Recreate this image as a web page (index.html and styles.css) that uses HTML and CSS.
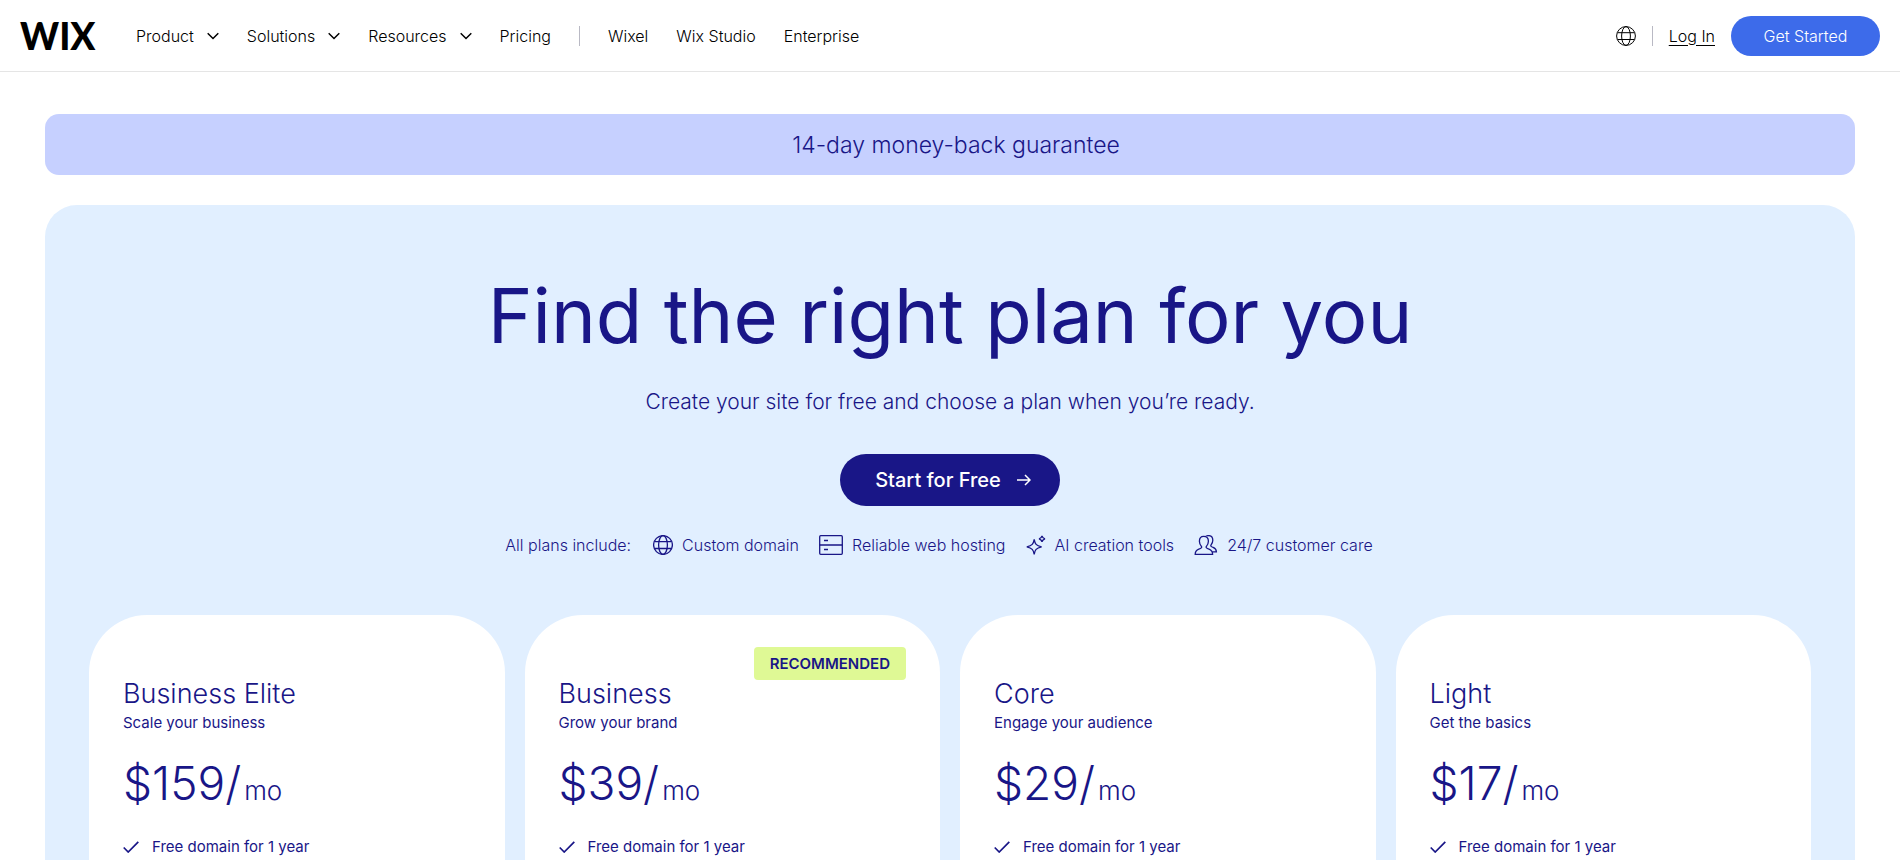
FILE: index.html
```html
<!DOCTYPE html>
<html lang="en">
<head>
<meta charset="utf-8">
<meta name="viewport" content="width=device-width, initial-scale=1">
<title>Wix Pricing</title>
<link rel="stylesheet" href="styles.css">
</head>
<body>
<svg class="sprite" aria-hidden="true">
  <symbol id="chevron" viewBox="0 0 12 8"><path d="M.7 1.2 6 6.5l5.300-5.300"/></symbol>
  <symbol id="globe" viewBox="0 0 20 20"><circle cx="10" cy="10" r="9.400"/><ellipse cx="10" cy="10" rx="4.400" ry="9.400"/><path d="M1.500 6.700h17M1.500 13.500h17"/></symbol>
  <symbol id="check" viewBox="0 0 16 12"><path d="M.7 6.500 5.200 11 15.300.8"/></symbol>
</svg>
<header class="header">
  <a class="logo" href="#" aria-label="Wix home">WIX</a>
  <nav class="nav" aria-label="Main">
    <button class="nav-item" type="button">Product<svg class="chevron"><use href="#chevron"/></svg></button>
    <button class="nav-item" type="button">Solutions<svg class="chevron"><use href="#chevron"/></svg></button>
    <button class="nav-item" type="button">Resources<svg class="chevron"><use href="#chevron"/></svg></button>
    <a class="nav-item" href="#">Pricing</a>
    <span class="divider"></span>
    <a class="nav-item" href="#">Wixel</a>
    <a class="nav-item" href="#">Wix Studio</a>
    <a class="nav-item" href="#">Enterprise</a>
  </nav>
  <div class="account">
    <button class="language" type="button" aria-label="Language"><svg class="globe"><use href="#globe"/></svg></button>
    <span class="divider"></span>
    <a class="login" href="#">Log In</a>
    <a class="get-started" href="#">Get Started</a>
  </div>
</header>
<main class="main">
  <p class="banner">14-day money-back guarantee</p>
  <section class="hero">
    <h1 class="title">Find the right plan for you</h1>
    <p class="subtitle">Create your site for free and choose a plan when you’re ready.</p>
    <a class="start" href="#">Start for Free<svg class="arrow" viewBox="0 0 14 12"><path d="M0 6h13M8 1l5 5-5 5"/></svg></a>
    <div class="includes">
      <span class="includes-label">All plans include:</span>
      <ul class="perks">
        <li class="perk"><svg class="perk-icon" viewBox="0 0 20 20"><use href="#globe"/></svg>Custom domain</li>
        <li class="perk"><svg class="perk-icon wide" viewBox="0 0 24 20"><rect x=".7" y=".7" width="22.600" height="18.600" rx="1"/><path d="M.7 10h22.600M5 5.500h4M5 14.500h4"/></svg>Reliable web hosting</li>
        <li class="perk"><svg class="perk-icon" viewBox="0 0 20 20"><path d="M8.200 4.300C9 9 10 10.600 15.600 11.800 10 13 9 14.800 8.200 19.400 7.400 14.800 6.200 13 .8 11.800 6.200 10.600 7.400 9 8.200 4.300ZM16 .8c.4 1.900 1 2.500 3 3-2 .5-2.600 1.100-3 3-.4-1.900-1-2.500-3-3 2-.5 2.600-1.100 3-3Z"/></svg>AI creation tools</li>
        <li class="perk"><svg class="perk-icon wide" viewBox="0 0 24 20"><path d="M9.700 1.300c-3 0-4.300 2.100-4.300 4.900 0 2.600 1.200 4.200 2 5.200.8 1.200-.2 1.800-2.600 2.700C2.300 15 1.200 16 1.200 19.300h17.400c0-3.300-1.100-4.300-3.600-5.200-2.400-.9-3.400-1.500-2.600-2.700.8-1 2-2.600 2-5.200 0-2.800-1.600-4.900-4.700-4.900ZM11.500 1.600c.7-.7 1.800-1 3-1 3 0 4.300 2.100 4.300 4.700 0 2.200-.9 3.600-1.700 4.600-.8 1.200.2 1.800 2 2.500 2.400.9 3.200 1.700 3.300 4.400h-4.600"/></svg>24/7 customer care</li>
      </ul>
    </div>
    <div class="plans">
      <article class="plan">
        <h2 class="plan-name">Business Elite</h2>
        <p class="plan-note">Scale your business</p>
        <p class="price">$159/<span class="period">mo</span></p>
        <ul class="features"><li class="feature"><svg class="check"><use href="#check"/></svg>Free domain for 1 year</li></ul>
      </article>
      <article class="plan">
        <span class="badge">RECOMMENDED</span>
        <h2 class="plan-name">Business</h2>
        <p class="plan-note">Grow your brand</p>
        <p class="price">$39/<span class="period">mo</span></p>
        <ul class="features"><li class="feature"><svg class="check"><use href="#check"/></svg>Free domain for 1 year</li></ul>
      </article>
      <article class="plan">
        <h2 class="plan-name">Core</h2>
        <p class="plan-note">Engage your audience</p>
        <p class="price">$29/<span class="period">mo</span></p>
        <ul class="features"><li class="feature"><svg class="check"><use href="#check"/></svg>Free domain for 1 year</li></ul>
      </article>
      <article class="plan">
        <h2 class="plan-name">Light</h2>
        <p class="plan-note">Get the basics</p>
        <p class="price">$17/<span class="period">mo</span></p>
        <ul class="features"><li class="feature"><svg class="check"><use href="#check"/></svg>Free domain for 1 year</li></ul>
      </article>
    </div>
  </section>
</main>
</body>
</html>
```
FILE: styles.css
```css
* { box-sizing: border-box; }
body { margin: 0; background: #fff; color: #000; font: 350 16px/24px Inter, "Open Sans", sans-serif; }
h1, h2, p, ul { margin: 0; padding: 0; font-weight: 350; }
ul { list-style: none; }
a { color: inherit; text-decoration: none; }
button { padding: 0; border: 0; background: none; color: inherit; font: inherit; cursor: pointer; }
svg { display: block; flex: none; fill: none; stroke: currentColor; }
.sprite { position: absolute; width: 0; height: 0; }

.header { display: flex; align-items: center; height: 72px; padding: 0 20px; border-bottom: 1px solid #e5e5e5; }
.logo { width: 76px; font: 900 37px/48px Lato, sans-serif; }
.nav { display: flex; align-items: center; gap: 28px; margin-left: 40px; }
.nav-item { display: flex; align-items: center; gap: 13px; white-space: nowrap; }
.chevron { width: 12px; height: 8px; stroke-width: 1.5; }
.divider { width: 1px; height: 20px; background: #b9b9c4; }
.account { display: flex; align-items: center; gap: 16px; margin-left: auto; }
.globe { width: 20px; height: 20px; }
.login { text-decoration: underline; text-underline-offset: 3px; }
.get-started { min-width: 149px; padding: 8px 28px; border-radius: 20px; background: #3d6bea; color: #fff; text-align: center; }

.main { padding: 42px 45px 0; color: #191687; }
.banner { padding: 15px 14px 13px 26px; border-radius: 14px; background: #c6d0ff; font-size: 23px; line-height: 33px; text-align: center; }
.hero { display: flex; flex-direction: column; align-items: center; margin-top: 30px; padding: 63px 44px 0; border-radius: 32px 32px 0 0; background: #e1efff; }
.title { font-size: 76px; font-weight: 390; line-height: 94px; text-align: center; }
.subtitle { margin-top: 24px; font-size: 21px; line-height: 32px; text-align: center; }
.start { display: flex; align-items: center; gap: 16px; margin-top: 36px; padding: 10px 29px 10px 35px; border-radius: 26px; background: #191687; color: #fff; font-size: 20px; font-weight: 500; line-height: 32px; }
.arrow { width: 14px; height: 12px; stroke-width: 1.5; }
.includes { display: flex; align-items: center; gap: 22px; margin-top: 27px; padding-right: 22px; font-weight: 300; }
.perks { display: flex; gap: 20px; }
.perk { display: flex; align-items: center; gap: 9px; white-space: nowrap; }
.perk-icon { width: 20px; height: 20px; stroke-width: 1.3; }
.perk-icon.wide { width: 24px; }

.plans { display: grid; grid-template-columns: repeat(4, 1fr); gap: 20px; width: 100%; margin-top: 58px; }
.plan { position: relative; padding: 62px 34px 48px; border-radius: 58px 58px 0 0; background: #fff; }
.badge { position: absolute; top: 32px; right: 34px; padding: 4px 16px; border-radius: 4px; background: #dff995; font-size: 15px; line-height: 25px; font-weight: 600; }
.plan-name { font-size: 27px; line-height: 34px; }
.plan-note { font-size: 15px; font-weight: 400; }
.price { margin-top: 22px; font-size: 46px; line-height: 52px; }
.period { margin-left: 3px; font-size: 26px; }
.features { margin-top: 18px; font-size: 15px; font-weight: 400; }
.feature { display: flex; align-items: center; gap: 13px; }
.check { width: 16px; height: 12px; stroke-width: 1.7; }
```
